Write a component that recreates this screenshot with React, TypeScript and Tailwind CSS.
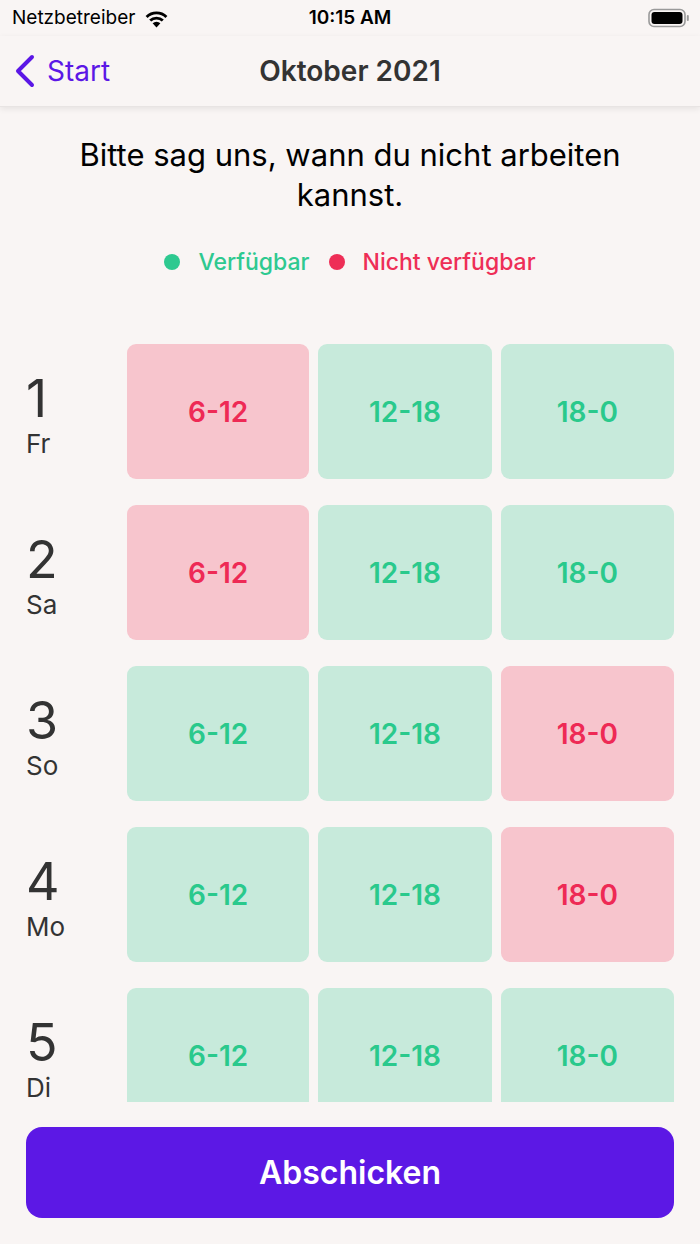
import React from 'react'

type Slot = { label: string; free: boolean }

const days: { num: number; name: string; slots: Slot[] }[] = [
  { num: 1, name: 'Fr', slots: [{ label: '6-12', free: false }, { label: '12-18', free: true }, { label: '18-0', free: true }] },
  { num: 2, name: 'Sa', slots: [{ label: '6-12', free: false }, { label: '12-18', free: true }, { label: '18-0', free: true }] },
  { num: 3, name: 'So', slots: [{ label: '6-12', free: true }, { label: '12-18', free: true }, { label: '18-0', free: false }] },
  { num: 4, name: 'Mo', slots: [{ label: '6-12', free: true }, { label: '12-18', free: true }, { label: '18-0', free: false }] },
  { num: 5, name: 'Di', slots: [{ label: '6-12', free: true }, { label: '12-18', free: true }, { label: '18-0', free: true }] },
]

function StatusBar() {
  return (
    <div className="h-[36px] flex items-center justify-between px-[12px] text-[19px] text-black relative">
      <div className="flex items-center gap-[9px]">
        <span>Netzbetreiber</span>
        <svg width="25" height="19" viewBox="0 0 25 19">
          <path d="M12.5 18.5 L8.6 14.2 A5.8 5.8 0 0 1 16.4 14.2 Z" fill="#000" />
          <path d="M5.2 10.6 A10.6 10.6 0 0 1 19.8 10.6 L17.8 12.6 A7.8 7.8 0 0 0 7.2 12.6 Z" fill="#000" />
          <path d="M1.6 6.9 A15.6 15.6 0 0 1 23.4 6.9 L21.4 8.9 A12.7 12.7 0 0 0 3.6 8.9 Z" fill="#000" />
        </svg>
      </div>
      <span className="absolute left-1/2 -translate-x-1/2 font-semibold text-[19px]">10:15 AM</span>
      <svg width="42" height="20" viewBox="0 0 42 20" className="mr-[-2px]">
        <rect x="1" y="1.5" width="36" height="17" rx="5" fill="none" stroke="#9a9a9a" strokeWidth="1.6" />
        <rect x="3.5" y="4" width="31" height="12" rx="3" fill="#000" />
        <rect x="38.8" y="7" width="2" height="6" rx="1" fill="#9a9a9a" />
      </svg>
    </div>
  )
}

function NavBar() {
  return (
    <div className="h-[71px] flex items-center relative shadow-[0_2px_6px_rgba(0,0,0,0.08)] border-b border-[#e8e4e3] bg-[#f9f5f4] z-10">
      <div className="flex items-center pl-[14px] gap-[11px] text-[#5b17e6]">
        <svg width="22" height="34" viewBox="0 0 22 34">
          <path d="M18 3 L4 17 L18 31" fill="none" stroke="#5b17e6" strokeWidth="4" strokeLinecap="round" strokeLinejoin="round" />
        </svg>
        <span className="text-[28px] leading-none">Start</span>
      </div>
      <span className="absolute left-1/2 -translate-x-1/2 text-[28px] font-semibold text-[#333]">Oktober 2021</span>
    </div>
  )
}

export default function App() {
  return (
    <div
      className="w-[700px] h-[1244px] bg-[#f9f5f4] flex flex-col overflow-hidden"
      style={{ fontFamily: 'Inter, "Noto Sans", sans-serif' }}
    >
      <StatusBar />
      <NavBar />

      <div className="flex-1 overflow-hidden min-h-0">
        <p className="mt-[28px] px-[60px] text-center text-[31px] leading-[40px] text-black">
          Bitte sag uns, wann du nicht arbeiten kannst.
        </p>
        <div className="mt-[32px] flex items-center justify-center text-[23px] font-medium leading-[30px]">
          <span className="w-[16px] h-[16px] rounded-full bg-[#2ec990]" />
          <span className="text-[#2ec990] ml-[18px]">Verfügbar</span>
          <span className="w-[16px] h-[16px] rounded-full bg-[#ee2e56] ml-[19px]" />
          <span className="text-[#ee2e56] ml-[18px]">Nicht verfügbar</span>
        </div>

        <div className="mt-[67px] flex flex-col gap-[26px] pr-[26px]">
          {days.map((d) => (
            <div key={d.num} className="flex items-stretch h-[135px]">
              <div className="w-[127px] pl-[26px] flex flex-col justify-center text-[#333]">
                <span className="text-[52px] leading-[56px] mt-[6px]">{d.num}</span>
                <span className="text-[26px] leading-[30px] mt-[2px]">{d.name}</span>
              </div>
              <div className="flex-1 grid grid-cols-[182fr_173fr_173fr] gap-[9px]">
                {d.slots.map((s) => (
                  <div
                    key={s.label}
                    className={
                      s.free
                        ? 'rounded-[9px] bg-[#c7eadb] text-[#2ac98c] flex items-center justify-center text-[28px] font-semibold'
                        : 'rounded-[9px] bg-[#f7c5cd] text-[#ee2a55] flex items-center justify-center text-[28px] font-semibold'
                    }
                  >
                    {s.label}
                  </div>
                ))}
              </div>
            </div>
          ))}
        </div>
      </div>

      <div className="h-[142px] shrink-0 px-[26px] pt-[25px]">
        <button className="w-full h-[91px] rounded-[16px] bg-[#5c18e5] text-white text-[32px] font-semibold">
          Abschicken
        </button>
      </div>
    </div>
  )
}
